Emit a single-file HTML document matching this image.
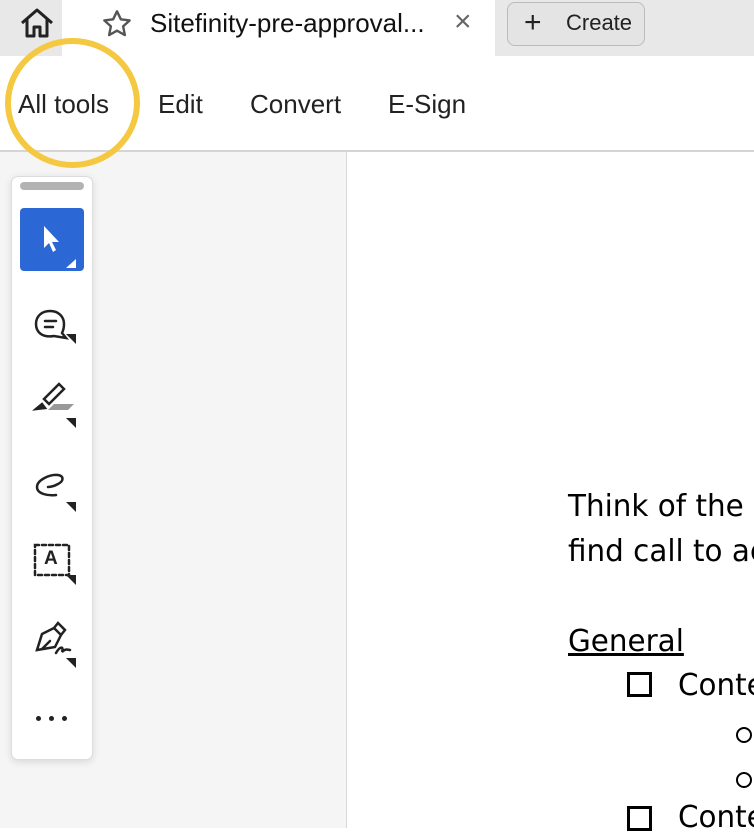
<!DOCTYPE html><html><head><style>
*{margin:0;padding:0;box-sizing:border-box}
body{width:754px;height:828px;overflow:hidden;position:relative;background:#fff;font-family:"Liberation Sans",sans-serif;color:#222}
.a{position:absolute}
.d{font-size:30px;color:#000;white-space:nowrap;font-family:'DejaVu Sans',sans-serif;transform:scaleX(.98);transform-origin:left}
</style></head><body>
<div class="a" style="left:0;top:0;width:754px;height:56px;background:#e8e8e8"></div>
<div class="a" style="left:62px;top:0;width:433px;height:56px;background:#fff"></div>
<svg class="a" style="left:18px;top:6px" width="38" height="34" viewBox="0 0 38 34"><path d="M4 17 L19 4 L34 17 M9 13 V30 H16 V21 H22 V30 H29 V13" fill="none" stroke="#222" stroke-width="3" stroke-linejoin="round"/></svg>
<svg class="a" style="left:101px;top:8px" width="32" height="32" viewBox="0 0 24 24"><path d="M12 2.5l2.9 6 6.6.8-4.9 4.5 1.3 6.5L12 17l-5.9 3.3 1.3-6.5-4.9-4.5 6.6-.8z" fill="none" stroke="#555" stroke-width="1.8" stroke-linejoin="round"/></svg>
<div class="a" style="left:150px;top:8px;font-size:26px;color:#111">Sitefinity-pre-approval...</div>
<div class="a" style="left:454px;top:5px;font-size:30px;color:#666">×</div>
<div class="a" style="left:507px;top:2px;width:138px;height:44px;border:1px solid #bbb;border-radius:8px;background:#e4e4e4"></div>
<div class="a" style="left:524px;top:6px;font-size:30px;color:#222">+</div>
<div class="a" style="left:566px;top:10px;font-size:22px;color:#222">Create</div>
<div class="a" style="left:0;top:150px;width:754px;height:2px;background:#d5d5d5"></div>
<div class="a" style="left:18px;top:89px;font-size:26px;color:#222">All tools</div>
<div class="a" style="left:158px;top:89px;font-size:26px">Edit</div>
<div class="a" style="left:250px;top:89px;font-size:26px">Convert</div>
<div class="a" style="left:388px;top:89px;font-size:26px">E-Sign</div>
<div class="a" style="left:0;top:152px;width:346px;height:676px;background:#f5f5f5"></div>
<div class="a" style="left:346px;top:152px;width:1px;height:676px;background:#d8d8d8"></div>
<div class="a" style="left:5px;top:38px;width:135px;height:130px;border:6px solid #f5c842;border-radius:50%"></div>
<div class="a" style="left:11px;top:176px;width:82px;height:584px;background:#fff;border:1px solid #ddd;border-radius:7px;box-shadow:0 2px 8px rgba(0,0,0,.12)"></div>
<div class="a" style="left:20px;top:182px;width:64px;height:8px;background:#b3b3b3;border-radius:4px"></div>
<div class="a" style="left:20px;top:208px;width:64px;height:63px;background:#2c67d6;border-radius:4px"></div>
<svg class="a" style="left:20px;top:208px" width="64" height="63"><path d="M24 18 V40 L29 35 L33 44 L36 42 L32 34 L39 34 Z" fill="#fff"/><path d="M56 51 L46 60 L56 60Z" fill="#fff"/></svg>
<svg class="a" style="left:20px;top:280px" width="64" height="400" fill="none" stroke="#222" stroke-width="2.5" stroke-linecap="round">
<path d="M34 56 C22 58 16 52 16 44 C16 36 22 31 30 31 C39 31 44 37 44 44 C44 48 43 51 42 53 L46 58 Z"/><path d="M25 41 H36 M25 47 H33"/>
<path d="M46 54 L56 64 L56 54 Z" fill="#222" stroke="none"/>
<path d="M24 119 L39 104 L44 109 L29 124 Z"/><path d="M16 129 L22 124 L25 128 Z" fill="#222"/><path d="M28 130 L48 130 L54 124 L34 124Z" fill="#999" stroke="none"/>
<path d="M46 138 L56 148 L56 138 Z" fill="#222" stroke="none"/>
<path d="M36 215 C28 216 17 214 17 207 C17 200 30 194 38 195 C44 196 44 201 38 204 C33 207 28 207 28 207"/>
<path d="M46 222 L56 232 L56 222 Z" fill="#222" stroke="none"/>
<rect x="15" y="265" width="34" height="30" stroke-dasharray="4 3"/>
<path d="M46 295 L56 305 L56 295 Z" fill="#222" stroke="none"/>
<path d="M17 370 L22 354 L34 348 L41 355 L35 367 Z"/><path d="M34 348 L38 343 L45 350 L41 355"/><path d="M22 369 L30 361"/><path d="M36 373 C40 366 44 366 42 372 C46 368 48 370 50 370"/>
<path d="M46 378 L56 388 L56 378 Z" fill="#222" stroke="none"/>
</svg>
<div class="a" style="left:44px;top:548px;font-size:19px;font-weight:bold;color:#222">A</div>
<div class="a" style="left:36px;top:716px;width:5px;height:5px;border-radius:50%;background:#222"></div>
<div class="a" style="left:49px;top:716px;width:5px;height:5px;border-radius:50%;background:#222"></div>
<div class="a" style="left:62px;top:716px;width:5px;height:5px;border-radius:50%;background:#222"></div>
<div class="a d" style="left:568px;top:489px">Think of the</div>
<div class="a d" style="left:568px;top:534px">find call to ac</div>
<div class="a d" style="left:568px;top:624px;text-decoration:underline">General</div>
<div class="a" style="left:627px;top:672px;width:25px;height:25px;border:3px solid #000"></div>
<div class="a d" style="left:678px;top:668px">Conte</div>
<div class="a" style="left:736px;top:727px;width:16px;height:16px;border:2px solid #000;border-radius:50%"></div>
<div class="a" style="left:736px;top:772px;width:16px;height:16px;border:2px solid #000;border-radius:50%"></div>
<div class="a" style="left:627px;top:806px;width:25px;height:25px;border:3px solid #000"></div>
<div class="a d" style="left:678px;top:800px">Conte</div>
</body></html>
